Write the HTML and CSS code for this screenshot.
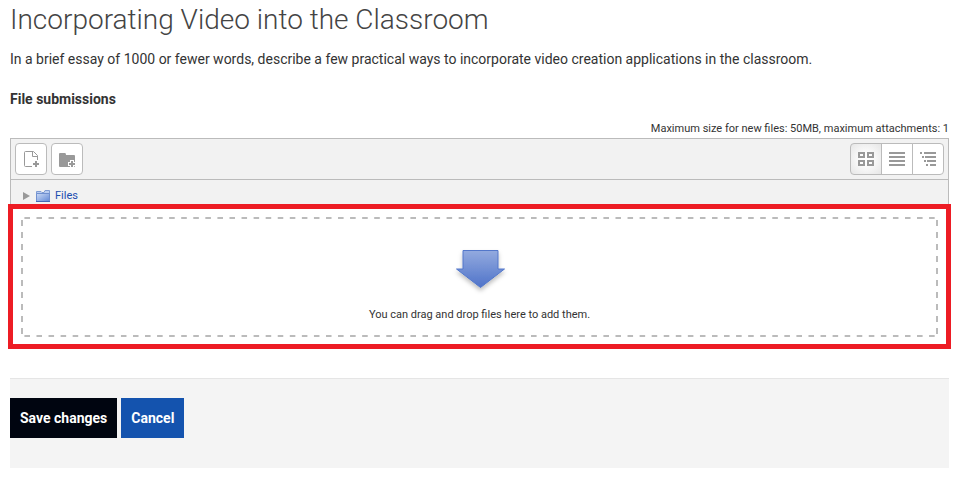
FILE: index.html
```
<!DOCTYPE html>
<html lang="en">
<head>
<meta charset="utf-8">
<title>Incorporating Video into the Classroom</title>
<link rel="stylesheet" href="styles.css">
</head>
<body>
<main>
  <h1>Incorporating Video into the Classroom</h1>
  <p class="intro">In a brief essay of 1000 or fewer words, describe a few practical ways to incorporate video creation applications in the classroom.</p>
  <form>
    <h2>File submissions</h2>
    <p class="limits">Maximum size for new files: 50MB, maximum attachments: 1</p>
    <section class="manager">
      <div class="toolbar">
        <div class="actions">
          <button type="button" class="tool" aria-label="Add file">
            <svg width="30" height="30" viewBox="0 0 30 30" fill="none" stroke="#999">
              <path d="M16 22.500H9.500Q8.500 22.500 8.500 21.500V8.500Q8.500 7.500 9.500 7.500H17.500L21.500 11.500V16M16.500 7.500V12.500H21.500"/>
              <path d="M20 17v6M17 20h6" stroke-width="2"/>
            </svg>
          </button>
          <button type="button" class="tool" aria-label="Create folder">
            <svg width="30" height="30" viewBox="0 0 30 30">
              <path d="M7 10q0-1 1-1h5q1 0 1 2h8q1 0 1 1v10q0 1-1 1H8q-1 0-1-1z" fill="#999"/>
              <path d="M20 16v8M16 20h8" stroke="#fff" stroke-width="4"/>
              <path d="M20 17v6M17 20h6" stroke="#999" stroke-width="2"/>
            </svg>
          </button>
        </div>
        <div class="views">
          <button type="button" class="view active" aria-label="Icon view">
            <svg width="16" height="14" viewBox="0 0 16 14" fill="none" stroke="#999" stroke-width="2">
              <path d="M1 1h5v4H1zM10 1h5v4h-5zM1 9h5v4H1zM10 9h5v4h-5z"/>
            </svg>
          </button>
          <button type="button" class="view" aria-label="List view">
            <svg width="16" height="14" viewBox="0 0 16 14" stroke="#999" stroke-width="2">
              <path d="M0 1h16M0 5h16M0 9h16M0 13h16"/>
            </svg>
          </button>
          <button type="button" class="view" aria-label="Tree view">
            <svg width="16" height="14" viewBox="0 0 16 14" stroke="#999" stroke-width="2">
              <path d="M0 1h2M4 1h12M2 5h2M5 5h11M4 9h2M7 9h9M6 13h2M10 13h6"/>
            </svg>
          </button>
        </div>
      </div>
      <nav class="path">
        <svg width="7" height="8" viewBox="0 0 7 8"><path d="M0 0v8l7-4z" fill="#999"/></svg>
        <svg class="folder" width="14" height="12" viewBox="0 0 14 12">
          <defs><linearGradient id="folder" x1="0" y1="0" x2="1" y2="1"><stop offset="0" stop-color="#cbdaf5"/><stop offset="1" stop-color="#6088d6"/></linearGradient></defs>
          <path d="M.5 11V1.500H5L6 2.500h2L9 .5h4.500V11z" fill="#b9cdf1" stroke="#7f9cd3"/>
          <path d="M.5 11.500V3.500h13v8z" fill="url(#folder)" stroke="#7090cf"/>
          <path d="M0 11.500h14" stroke="#4569b5"/>
        </svg>
        <a href="#">Files</a>
      </nav>
      <div class="highlight">
        <div class="dropzone">
          <svg width="60" height="52" viewBox="0 0 60 52">
            <defs>
              <linearGradient id="arrow" x1="0" y1="0" x2="0" y2="1"><stop offset="0" stop-color="#93aadf"/><stop offset="1" stop-color="#4f73c9"/></linearGradient>
              <filter id="shadow" x="-20%" y="-20%" width="140%" height="150%"><feDropShadow dx="0" dy="3" stdDeviation="2" flood-color="#000" flood-opacity=".25"/></filter>
            </defs>
            <path d="M13 5.500h35v18.500H54.500L30.500 42.500 6.500 24H13z" fill="url(#arrow)" stroke="#5277ca" filter="url(#shadow)"/>
          </svg>
          <p>You can drag and drop files here to add them.</p>
        </div>
      </div>
    </section>
    <div class="footer">
      <button type="submit" class="button save">Save changes</button>
      <button type="button" class="button cancel">Cancel</button>
    </div>
  </form>
</main>
</body>
</html>
```
FILE: styles.css
```
* {
  box-sizing: border-box;
}

body {
  margin: 0;
  padding: 0 11px 0 10px;
  background: #fff;
  color: #333;
  font: 14px/20px Roboto, sans-serif;
}

h1,
h2,
p {
  margin: 0;
}

h1 {
  padding-bottom: 9px;
  color: #444;
  font-size: 28px;
  line-height: 40px;
  font-weight: 300;
}

h2 {
  margin-top: 20px;
  font-size: 14px;
  font-weight: 700;
}

.limits {
  margin-top: 11px;
  font-size: 11px;
  line-height: 18px;
  text-align: right;
}

.manager {
  border: 1px solid #bbb;
  border-bottom: 0;
  background: #f2f2f2;
}

.toolbar {
  display: flex;
  justify-content: space-between;
  padding: 4px;
  border-bottom: 1px solid #bbb;
}

.actions {
  display: flex;
  gap: 4px;
}

.tool,
.view {
  display: flex;
  align-items: center;
  justify-content: center;
  height: 32px;
  padding: 0;
  border: 1px solid #bbb;
  background: #fff;
}

.tool {
  width: 32px;
  border-radius: 4px;
}

.tool svg {
  flex: none;
}

.views {
  display: flex;
}

.view {
  width: 32px;
}

.view + .view {
  margin-left: -1px;
}

.view:first-child {
  border-radius: 4px 0 0 4px;
}

.view:last-child {
  border-radius: 0 4px 4px 0;
}

.view.active {
  background: radial-gradient(#fff 20%, #e6e6e6 100%);
}

.path {
  display: flex;
  align-items: center;
  height: 24px;
  padding: 7px 12px 0;
  font-size: 11px;
  line-height: 18px;
}

.folder {
  margin: 0 5px 0 6px;
}

.path a {
  color: #1a4db0;
  text-decoration: none;
}

.highlight {
  margin: 0 -3px;
  padding: 8px 8px 7px;
  border: 5px solid #ed1c24;
  background: #fff;
}

/* Long dashes: each tile holds half a dash at either end, so corners stay closed. */
.dropzone {
  --across: linear-gradient(90deg, #bbb 25%, transparent 25% 75%, #bbb 75%);
  --down: linear-gradient(#bbb 25%, transparent 25% 75%, #bbb 75%);
  display: flex;
  flex-direction: column;
  align-items: center;
  padding: 28px 0 12px;
  background:
    var(--across) top / 12px 2px round no-repeat,
    var(--across) bottom / 12px 2px round no-repeat,
    var(--down) left / 2px 12px no-repeat round,
    var(--down) right / 2px 12px no-repeat round;
  font-size: 11px;
}

.dropzone p {
  margin-top: 8px;
}

.footer {
  display: flex;
  gap: 4px;
  margin-top: 29px;
  padding: 19px 0 30px;
  border-top: 1px solid #e5e5e5;
  background: #f4f4f4;
}

.button {
  height: 40px;
  padding: 0 10px;
  border: 0;
  color: #fff;
  font: 700 14px/20px Roboto, sans-serif;
}

.save {
  background: #000510;
}

.cancel {
  background: #1453ae;
}
```
